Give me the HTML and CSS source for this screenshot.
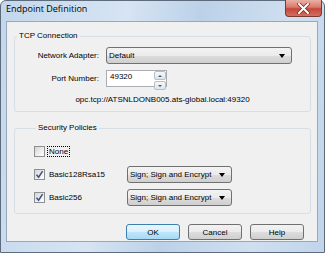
FILE: index.html
```html
<!DOCTYPE html>
<html lang="en">
<head>
    <meta charset="UTF-8">
    <title>Endpoint Definition</title>
    <link rel="stylesheet" href="styles.css">
</head>
<body>
    <div class="window">
        <div class="titlebar">
            <span class="title">Endpoint Definition</span>
            <div class="close-btn">
                <svg width="13" height="11" viewBox="0 0 13 11">
                    <path d="M2 1 L11 10 M11 1 L2 10" stroke="#6b2a22" stroke-width="3.4" stroke-linecap="round"/>
                    <path d="M2 1 L11 10 M11 1 L2 10" stroke="#ffffff" stroke-width="2" stroke-linecap="round"/>
                </svg>
            </div>
        </div>

        <div class="client">
            <fieldset class="group tcp-group">
                <legend>TCP Connection</legend>
                <div class="form-grid">
                    <label class="field-label">Network Adapter:</label>
                    <div class="combo adapter-combo">
                        <span>Default</span>
                        <span class="arrow"></span>
                    </div>

                    <label class="field-label">Port Number:</label>
                    <div class="spin">
                        <span class="spin-value">49320</span>
                        <div class="spin-buttons">
                            <div class="spin-btn"><span class="up"></span></div>
                            <div class="spin-btn"><span class="down"></span></div>
                        </div>
                    </div>
                </div>
                <div class="url">opc.tcp://ATSNLDONB005.ats-global.local:49320</div>
            </fieldset>

            <fieldset class="group policy-group">
                <legend>Security Policies</legend>
                <div class="policy-row">
                    <div class="check-cell">
                        <span class="checkbox"></span>
                        <span class="check-label focused">None</span>
                    </div>
                </div>
                <div class="policy-row">
                    <div class="check-cell">
                        <span class="checkbox checked">
                            <svg width="9" height="9" viewBox="0 0 9 9"><path d="M1.5 4.8 L3.6 7.2 L7.6 1.2" fill="none" stroke="#3b4f8a" stroke-width="1.5"/></svg>
                        </span>
                        <span class="check-label">Basic128Rsa15</span>
                    </div>
                    <div class="combo mode-combo">
                        <span>Sign; Sign and Encrypt</span>
                        <span class="arrow"></span>
                    </div>
                </div>
                <div class="policy-row">
                    <div class="check-cell">
                        <span class="checkbox checked">
                            <svg width="9" height="9" viewBox="0 0 9 9"><path d="M1.5 4.8 L3.6 7.2 L7.6 1.2" fill="none" stroke="#3b4f8a" stroke-width="1.5"/></svg>
                        </span>
                        <span class="check-label">Basic256</span>
                    </div>
                    <div class="combo mode-combo">
                        <span>Sign; Sign and Encrypt</span>
                        <span class="arrow"></span>
                    </div>
                </div>
            </fieldset>

            <div class="button-row">
                <button class="btn default">OK</button>
                <button class="btn">Cancel</button>
                <button class="btn">Help</button>
            </div>
        </div>
    </div>
</body>
</html>
```

FILE: styles.css
```css
body {
    margin: 0;
    background-color: #ffffff;
    font-family: "Liberation Sans", Arial, sans-serif;
    font-size: 8px;
    color: #000000;
}
.window {
    width: 325px;
    height: 253px;
    box-sizing: border-box;
    border: 1px solid #5d6b7d;
    border-radius: 6px 6px 0 0;
    background: linear-gradient(100deg, #c3d7ec 0%, #d6e4f3 35%, #bcd1e8 55%, #cfdff0 80%, #c0d4ea 100%);
    padding: 0 6px 10px 5px;
    display: flex;
    flex-direction: column;
}
.titlebar {
    height: 20px;
    display: flex;
    justify-content: space-between;
    align-items: flex-start;
    margin-right: -4px;
}
.title {
    font-family: "Open Sans", "Liberation Sans", sans-serif;
    font-size: 9px;
    line-height: 20px;
    margin-top: -2px;
    color: #000000;
}
.close-btn {
    width: 35px;
    height: 16px;
    margin-top: -1px;
    border: 1px solid #7a3a32;
    border-top: none;
    border-radius: 0 0 4px 4px;
    background: linear-gradient(180deg, #eab0a4 0%, #d9796c 45%, #c5463a 55%, #d2705f 100%);
    display: flex;
    align-items: center;
    justify-content: center;
}
.client {
    flex: 1;
    background-color: #f0f0f0;
    border: 1px solid #98a8ba;
    padding: 9px 6px 0 7px;
    display: flex;
    flex-direction: column;
}
.group {
    margin: 0;
    padding: 0;
    border: 1px solid #d5dfe5;
    border-radius: 3px;
}
.group legend {
    margin-left: 2px;
    padding: 0 2px;
    line-height: 10px;
}
.tcp-group {
    padding: 6px 0 6px 0;
}
.form-grid {
    display: grid;
    grid-template-columns: 84px auto;
    column-gap: 7px;
    row-gap: 6px;
    align-items: center;
}
.field-label {
    text-align: right;
}
.combo {
    height: 17px;
    box-sizing: border-box;
    border: 1px solid #707070;
    border-radius: 3px;
    background: linear-gradient(180deg, #f3f3f3 0%, #ebebeb 50%, #dddddd 51%, #cfcfcf 100%);
    display: flex;
    align-items: center;
    justify-content: space-between;
    padding: 0 6px 0 2px;
}
.adapter-combo {
    width: 186px;
}
.arrow {
    width: 0;
    height: 0;
    border-left: 3px solid transparent;
    border-right: 3px solid transparent;
    border-top: 4px solid #000000;
}
.spin {
    width: 61px;
    height: 17px;
    box-sizing: border-box;
    border: 1px solid #abadb3;
    background-color: #ffffff;
    display: flex;
    justify-content: space-between;
    align-items: flex-start;
}
.spin-value {
    padding: 1px 0 0 3px;
}
.spin-buttons {
    width: 12px;
    display: flex;
    flex-direction: column;
    gap: 1px;
}
.spin-btn {
    height: 7px;
    border: 1px solid #b4bfca;
    border-radius: 2px;
    background: linear-gradient(180deg, #f6f8fa 0%, #dde5ec 100%);
    display: flex;
    align-items: center;
    justify-content: center;
}
.spin-btn .up {
    border-left: 2px solid transparent;
    border-right: 2px solid transparent;
    border-bottom: 2px solid #4b5a6a;
}
.spin-btn .down {
    border-left: 2px solid transparent;
    border-right: 2px solid transparent;
    border-top: 2px solid #4b5a6a;
}
.url {
    text-align: center;
    line-height: 10px;
    margin-top: 8px;
}
.policy-group {
    margin-top: 11px;
    padding: 10px 0 7px 19px;
    display: flex;
    flex-direction: column;
    gap: 6px;
}
.policy-row {
    height: 17px;
    display: flex;
    align-items: center;
}
.check-cell {
    width: 93px;
    display: flex;
    align-items: center;
    gap: 2px;
}
.checkbox {
    width: 11px;
    height: 11px;
    box-sizing: border-box;
    border: 1px solid #8e8f8f;
    background: linear-gradient(135deg, #d4d4d4 0%, #f4f4f4 70%, #ffffff 100%);
    display: flex;
    align-items: center;
    justify-content: center;
}
.check-label {
    padding: 0 1px;
    border: 1px solid transparent;
    line-height: 9px;
}
.check-label.focused {
    border: 1px dotted #000000;
}
.mode-combo {
    width: 105px;
}
.button-row {
    margin-top: 10px;
    display: flex;
    justify-content: flex-end;
    gap: 8px;
    padding-right: 7px;
}
.btn {
    width: 54px;
    height: 16px;
    padding: 0;
    font-family: "Liberation Sans", Arial, sans-serif;
    font-size: 8px;
    color: #000000;
    border: 1px solid #707070;
    border-radius: 3px;
    background: linear-gradient(180deg, #f2f2f2 0%, #ebebeb 50%, #dddddd 51%, #cfcfcf 100%);
}
.btn.default {
    border-color: #3c7fb1;
    background: linear-gradient(180deg, #eaf6fd 0%, #d9f0fc 50%, #bee6fd 51%, #a7d9f5 100%);
}
```
